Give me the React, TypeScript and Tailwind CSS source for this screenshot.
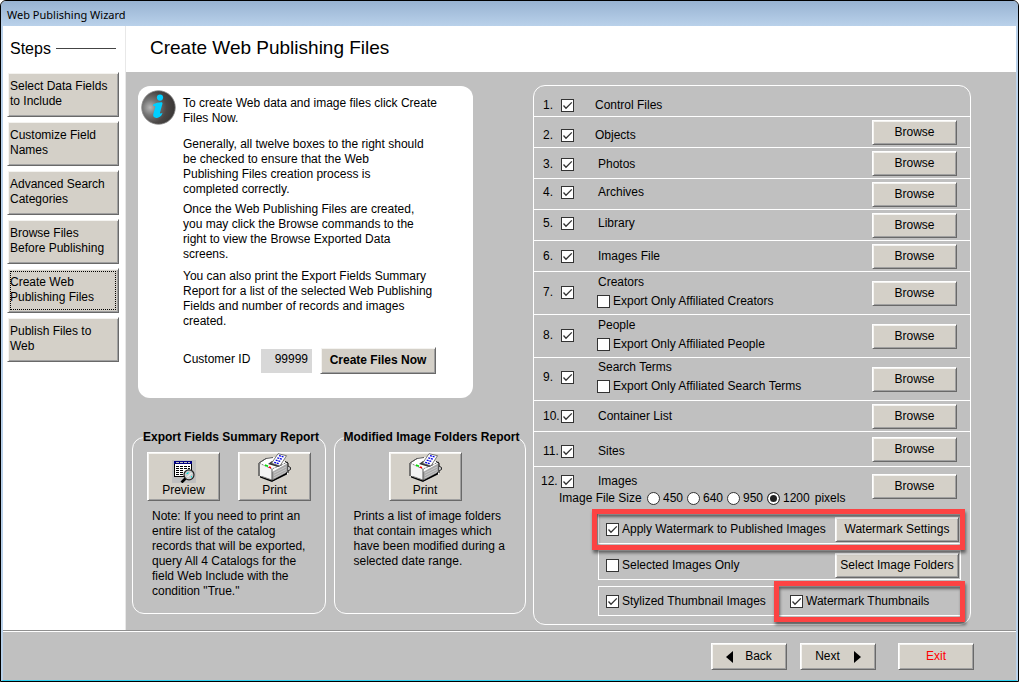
import type { ButtonHTMLAttributes, ReactNode } from 'react';
import clsx from 'clsx';

type ExportRow = {
  id: number;
  label: string;
  sub?: string;
  browse?: boolean;
  height: string;
  align?: string;
  indent?: string;
};

const STEPS = [
  'Select Data Fields to Include',
  'Customize Field Names',
  'Advanced Search Categories',
  'Browse Files Before Publishing',
  'Create Web Publishing Files',
  'Publish Files to Web',
];

const CURRENT_STEP = 4;

const ROWS: ExportRow[] = [
  { id: 1, label: 'Control Files', browse: false, height: 'h-[31px]', align: 'pt-2', indent: 'pl-[21px]' },
  { id: 2, label: 'Objects', height: 'h-[31px]', align: 'pt-1.5', indent: 'pl-[21px]' },
  { id: 3, label: 'Photos', height: 'h-[31px]', align: 'pt-0.5' },
  { id: 4, label: 'Archives', height: 'h-[31px]', align: 'pb-1' },
  { id: 5, label: 'Library', height: 'h-[31px]', align: 'pb-1' },
  { id: 6, label: 'Images File', height: 'h-[31px]' },
  { id: 7, label: 'Creators', sub: 'Export Only Affiliated Creators', height: 'h-[43px]', align: 'pb-0.5' },
  { id: 8, label: 'People', sub: 'Export Only Affiliated People', height: 'h-[43px]', align: 'pb-0.5' },
  { id: 9, label: 'Search Terms', sub: 'Export Only Affiliated Search Terms', height: 'h-[43px]', align: 'pb-1' },
  { id: 10, label: 'Container List', height: 'h-[31px]' },
  { id: 11, label: 'Sites', height: 'h-[35px]', align: 'pt-1' },
];

const SIZES = ['450', '640', '950', '1200'];

function BevelButton({ className, children, ...rest }: ButtonHTMLAttributes<HTMLButtonElement>) {
  return (
    <button
      type="button"
      className={clsx(
        'shrink-0 border border-t-white border-l-white border-r-[#696969] border-b-[#696969] bg-[#d4d0c8] shadow-[inset_1px_1px_0_#f4f3f0,inset_-1px_-1px_0_#a0a0a0]',
        className,
      )}
      {...rest}
    >
      {children}
    </button>
  );
}

function CheckBox({ id, checked = false }: { id: string; checked?: boolean }) {
  return (
    <span className="grid size-[13px] shrink-0">
      <input
        id={id}
        type="checkbox"
        defaultChecked={checked}
        className="peer col-start-1 row-start-1 size-[13px] appearance-none border border-[#333] bg-white"
      />
      <svg
        viewBox="0 0 13 13"
        className="pointer-events-none invisible col-start-1 row-start-1 size-[13px] peer-checked:visible"
        fill="none"
        stroke="#333"
        strokeWidth="1.3"
      >
        <path d="M2.5 6.5 5 9.2 10.8 3.4" />
      </svg>
    </span>
  );
}

function CheckField({ id, checked, children }: { id: string; checked?: boolean; children: ReactNode }) {
  return (
    <div className="flex items-center gap-[3px] whitespace-nowrap">
      <CheckBox id={id} checked={checked} />
      <label htmlFor={id}>{children}</label>
    </div>
  );
}

function InfoIcon() {
  return (
    <svg viewBox="0 0 35 35" className="size-[35px] shrink-0" aria-hidden="true">
      <defs>
        <radialGradient id="ball" cx="0.25" cy="0.5" r="0.75">
          <stop offset="0" stopColor="#b8b8b8" />
          <stop offset="0.3" stopColor="#777" />
          <stop offset="0.65" stopColor="#4a4645" />
          <stop offset="1" stopColor="#393635" />
        </radialGradient>
      </defs>
      <circle cx="17.5" cy="17.5" r="16.8" fill="url(#ball)" stroke="#8a8a8a" strokeWidth="0.8" />
      <circle cx="19" cy="7.6" r="3.1" fill="#00cfff" />
      <path
        d="M12.4 14.2c2.4-1 5-1.8 7.8-1.9 1.1 0 1.5.6 1.2 1.6l-2.4 8.7c-.2.9.2 1.2 1 .8l1.3-.6c.4 1.8-2.5 5-5.6 5.2-2.8.1-4-1.5-3.4-3.900l1.900-6.800c.2-.8-.2-1.200-1-1.200h-1.200z"
        fill="#00cfff"
      />
    </svg>
  );
}

function PreviewIcon() {
  return (
    <svg viewBox="0 0 24 23" className="h-[23px] w-6" shapeRendering="crispEdges" aria-hidden="true">
      <path d="M0 0h24v23H0z" fill="#c0c0c0" />
      <path d="M2 1h18v16H2z" fill="#000" />
      <path d="M3 4h16v12H3z" fill="#fff" />
      <path d="M2 1h18v3H2z" fill="#000080" />
      <path d="M4 2h3v1H4zM8 2h3v1H8zM12 2h3v1h-3zM16 2h2v1h-2z" fill="#c0c0c0" />
      <path
        d="M4 6h3M8 6h3M12 6h3M16 6h2M4 8h3M8 8h3M12 8h3M16 8h2M4 10h3M8 10h3M4 12h3M8 12h3M4 14h3M8 14h3"
        stroke="#000"
        strokeWidth="1"
        transform="translate(0 0.5)"
      />
      <g shapeRendering="auto">
        <path d="m13.5 18.5-4 4" stroke="#000" strokeWidth="2.6" />
        <circle cx="17" cy="14.8" r="5" fill="#c8cccc" stroke="#222" strokeWidth="1.2" />
        <path d="M14.5 13.5h1.5v-1.5M19.5 17.5V16" fill="none" stroke="#00e0e0" />
        <path d="m15.5 17 4-4" stroke="#fff" />
      </g>
    </svg>
  );
}

function PrinterIcon() {
  return (
    <svg viewBox="0 0 33 30" className="h-[30px] w-[33px]" aria-hidden="true">
      {/* body */}
      <path d="m1 10 7-5 10-1 12 6v11l-15 8L2 24z" fill="#fff" />
      <path d="M14 19 30 10v9l-16 8z" fill="#a8a8a8" />
      <path d="m1 10 13 5v13L2 23z" fill="#f4f4f4" />
      <path d="m2 23 12 4 15-8v2.5L14 29 2 24.5z" fill="#000" />
      <path d="m4 23.5 10 3.5 14-7.5" fill="none" stroke="#808080" />
      <path d="m1 23V10l7-4.500 7-1M14 16v11" fill="none" stroke="#555" />
      <path d="M1 23V10l7-4.5" fill="none" stroke="#555" />
      <path d="m1 10 13 6 16-7" fill="none" stroke="#808080" strokeDasharray="2 1" />
      <path d="M27 8.5 30 10v10" fill="none" stroke="#000" />
      <path d="m16 20 12-6M16 22.5l12-6M16 25l12-6" stroke="#d8d8d8" strokeWidth="0.7" />
      <path d="m30 13 2.5 1.5v2L30 18" fill="#c0c0c0" stroke="#000" strokeWidth="0.8" />
      {/* paper */}
      <path d="m10 11 4-3 10 4-4 2z" fill="#333" />
      <path d="m20 .7 8.5 2L22 13l-8.5-2.7z" fill="#fff" stroke="#555" strokeWidth="0.8" />
      <path
        d="m21 2.7 4.5 1.1M19.3 4.9l4.7 1.2M17.7 7.1l4.6 1.2M16.2 9.3l4.5 1.3"
        stroke="#0000e0"
        strokeWidth="1.3"
        strokeDasharray="2 0.7"
      />
      {/* lights */}
      <path d="m7 12 3 1.2" stroke="#00e000" strokeWidth="1.5" />
      <path d="m11 14 2 .8" stroke="#f00" strokeWidth="1.5" />
    </svg>
  );
}

function ReportButton({ icon, children }: { icon: ReactNode; children: ReactNode }) {
  return (
    <BevelButton className="flex h-[49px] w-[73px] flex-col items-center justify-end pb-0.5">
      {icon}
      <span>{children}</span>
    </BevelButton>
  );
}

function Highlight({ className }: { className: string }) {
  return (
    <div
      className={clsx(
        'pointer-events-none absolute border-5 border-[#fc4343] shadow-[1px_3px_3px_rgba(0,0,0,0.5),inset_1px_3px_3px_rgba(0,0,0,0.5)]',
        className,
      )}
    />
  );
}

function ExportRowView({ row }: { row: ExportRow }) {
  const checkId = `row-${row.id}`;
  return (
    <li className={clsx('flex items-center border-b border-white pr-[13px] pl-[9px]', row.height)}>
      <div className={clsx('flex flex-1 items-center', row.align)}>
        <span className="w-[18px]">{row.id}.</span>
        <CheckBox id={checkId} checked />
        <div className={row.indent ?? 'pl-6'}>
          <label htmlFor={checkId} className="block">
            {row.label}
          </label>
          {row.sub && (
            <div className="-ml-px pt-1">
              <CheckField id={`${checkId}-affiliated`}>{row.sub}</CheckField>
            </div>
          )}
        </div>
      </div>
      {row.browse !== false && <BevelButton className="h-[25px] w-[85px]">Browse</BevelButton>}
    </li>
  );
}

export default function App() {
  return (
    <div className="flex min-h-screen flex-col overflow-hidden rounded-t-md border border-black bg-[#c0c0c0] font-['Liberation_Sans',Arial,sans-serif] text-[12px] leading-[15px] text-black">
      <div className="flex h-[25px] items-center bg-linear-to-b from-[#98b3d2] to-[#b9d1ea] pt-0.5 pl-1.5 font-['Noto_Sans','Open_Sans',sans-serif] text-[11px]">
        Web Publishing Wizard
      </div>

      <div className="flex flex-1 flex-col border-x-2 border-b border-x-[#b9d1ea] border-b-[#30d0f0]">
        <div className="flex flex-1">
          <aside className="w-[123px] shrink-0 border-r border-[#e8e8e8] bg-white pr-1.5 pl-1">
            <div className="flex h-[46px] items-center gap-[5px] pb-0.5 pl-[3px] text-[16px]">
              <h2>Steps</h2>
              <span className="mr-[3px] h-px flex-1 bg-[#444]" />
            </div>
            <nav className="flex flex-col gap-1">
              {STEPS.map((step, i) => (
                <BevelButton
                  key={step}
                  aria-current={i === CURRENT_STEP ? 'step' : undefined}
                  className={clsx(
                    'flex h-[45px] items-center px-0.5 pb-0.5 text-left',
                    i === CURRENT_STEP && '-outline-offset-4 outline-1 outline-dotted outline-black',
                  )}
                >
                  {step}
                </BevelButton>
              ))}
            </nav>
          </aside>

          <div className="flex min-w-0 flex-1 flex-col">
            <header className="flex h-[46px] shrink-0 items-center bg-white pb-1 pl-6">
              <h1 className="text-[19px]">Create Web Publishing Files</h1>
            </header>

            <main className="flex flex-1 gap-[7px] pt-[13px] pr-[45px] pb-[5px] pl-1.5">
              <div className="flex w-[394px] shrink-0 flex-col">
                <section className="mt-px mr-[53px] ml-1.5 flex h-[312px] gap-[7px] rounded-xl bg-white pt-1 pl-[3px]">
                  <InfoIcon />
                  <div className="w-[264px] pt-1.5">
                    <p className="mb-[11px]">To create Web data and image files click Create Files Now.</p>
                    <p className="mb-[5px] pr-[21px]">
                      Generally, all twelve boxes to the right should be checked to ensure that the Web Publishing Files
                      creation process is completed correctly.
                    </p>
                    <p className="mb-[7px] pr-[21px]">
                      Once the Web Publishing Files are created, you may click the Browse commands to the right to view
                      the Browse Exported Data screens.
                    </p>
                    <p className="mb-[18px] pr-1">
                      You can also print the Export Fields Summary Report for a list of the selected Web Publishing
                      Fields and number of records and images created.
                    </p>
                    <div className="flex items-center">
                      <label htmlFor="customer" className="w-[78px] pb-0.5">
                        Customer ID
                      </label>
                      <input
                        id="customer"
                        defaultValue="99999"
                        className="mr-2 h-6 w-[51px] bg-[#d8d8d8] pr-1 pb-1 text-right"
                      />
                      <BevelButton className="h-[27px] w-[116px] font-bold">Create Files Now</BevelButton>
                    </div>
                  </div>
                </section>

                <div className="mt-8 flex gap-2">
                  <fieldset className="w-[194px] min-w-0 rounded-xl border border-white pt-[7px] pr-1.5 pb-[14px] pl-[10px]">
                    <legend className="font-bold whitespace-nowrap">Export Fields Summary Report</legend>
                    <div className="flex gap-[18px] pl-1">
                      <ReportButton icon={<PreviewIcon />}>Preview</ReportButton>
                      <ReportButton icon={<PrinterIcon />}>Print</ReportButton>
                    </div>
                    <p className="mt-2 ml-[9px] w-40">
                      Note: If you need to print an entire list of the catalog records that will be exported, query All
                      4 Catalogs for the field Web Include with the condition "True."
                    </p>
                  </fieldset>

                  <fieldset className="w-[193px] min-w-0 rounded-xl border border-white pt-[7px] pr-1.5 pl-[9px]">
                    <legend className="font-bold whitespace-nowrap">Modified Image Folders Report</legend>
                    <div className="flex pl-[45px]">
                      <ReportButton icon={<PrinterIcon />}>Print</ReportButton>
                    </div>
                    <p className="mt-2 ml-[10px] w-40">
                      Prints a list of image folders that contain images which have been modified during a selected date
                      range.
                    </p>
                  </fieldset>
                </div>
              </div>

              <section className="min-w-0 flex-1 rounded-xl border border-white">
                <ul>
                  {ROWS.map((row) => (
                    <ExportRowView key={row.id} row={row} />
                  ))}
                </ul>

                <div className="flex justify-between pt-[7px] pr-[13px] pl-[7px]">
                  <div>
                    <div className="flex items-center">
                      <span className="w-5">12.</span>
                      <CheckBox id="row-12" checked />
                      <label htmlFor="row-12" className="pl-6">
                        Images
                      </label>
                    </div>
                    <div role="radiogroup" aria-label="Image File Size" className="flex items-center pt-0.5 pl-[18px]">
                      <span className="w-[88px]">Image File Size</span>
                      {SIZES.map((size) => (
                        <label key={size} className="flex min-w-10 items-center gap-[3px]">
                          <input
                            type="radio"
                            name="size"
                            defaultChecked={size === '1200'}
                            className="size-[13px] appearance-none rounded-full border border-[#333] bg-white checked:bg-[#222] checked:shadow-[inset_0_0_0_2px_white]"
                          />
                          {size}
                        </label>
                      ))}
                      <span className="pl-[5px]">pixels</span>
                    </div>
                  </div>
                  <BevelButton className="h-[25px] w-[85px]">Browse</BevelButton>
                </div>

                <div className="mt-2 mr-[9px] mb-1.5 ml-16 flex flex-col gap-1.5">
                  <div className="relative flex h-[30px] items-center justify-between border border-white pr-px pl-[7px]">
                    <CheckField id="watermark" checked>
                      Apply Watermark to Published Images
                    </CheckField>
                    <BevelButton className="h-[25px] w-[124px]">Watermark Settings</BevelButton>
                    <Highlight className="-top-1.5 -right-[5px] -bottom-[7px] -left-[7px]" />
                  </div>
                  <div className="flex h-[30px] items-center justify-between border border-white pr-px pl-[7px]">
                    <CheckField id="selected-only">Selected Images Only</CheckField>
                    <BevelButton className="h-[25px] w-[124px]">Select Image Folders</BevelButton>
                  </div>
                  <div className="relative flex h-[30px] items-center border border-white pl-[7px]">
                    <div className="w-[184px]">
                      <CheckField id="stylized" checked>
                        Stylized Thumbnail Images
                      </CheckField>
                    </div>
                    <CheckField id="thumbs" checked>
                      Watermark Thumbnails
                    </CheckField>
                    <Highlight className="-top-1.5 -right-[5px] -bottom-[7px] left-[175px]" />
                  </div>
                </div>
              </section>
            </main>
          </div>
        </div>

        <footer className="border-t border-[#909090]">
          <div className="flex items-center justify-end border-t border-white pt-[11px] pr-[42px] pb-[10px]">
            <BevelButton className="mr-[13px] flex h-[27px] w-[76px] items-center justify-center gap-3">
              <svg viewBox="0 0 7 12" className="h-3 w-[7px]" aria-hidden="true">
                <path d="M7 0v12L0 6z" />
              </svg>
              Back
            </BevelButton>
            <BevelButton className="mr-[22px] flex h-[27px] w-[76px] items-center justify-center gap-[14px]">
              Next
              <svg viewBox="0 0 7 12" className="h-3 w-[7px]" aria-hidden="true">
                <path d="M0 0v12l7-6z" />
              </svg>
            </BevelButton>
            <BevelButton className="h-[27px] w-[76px] text-[#f00]">Exit</BevelButton>
          </div>
        </footer>
      </div>
    </div>
  );
}
